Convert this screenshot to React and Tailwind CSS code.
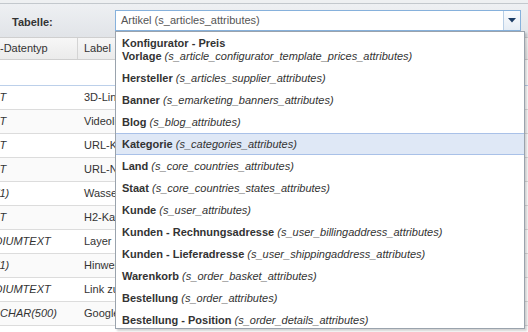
import React from 'react';

const rows = [
  ['TEXT', '3D-Link'],
  ['TEXT', 'Videolink'],
  ['TEXT', 'URL-Kategorie'],
  ['TEXT', 'URL-Name'],
  ['INT(1)', 'Wasserzeichen'],
  ['TEXT', 'H2-Kategorie'],
  ['MEDIUMTEXT', 'Layer'],
  ['INT(1)', 'Hinweis'],
  ['MEDIUMTEXT', 'Link zu'],
  ['VARCHAR(500)', 'Google'],
];

const options = [
  ['Hersteller', 's_articles_supplier_attributes'],
  ['Banner', 's_emarketing_banners_attributes'],
  ['Blog', 's_blog_attributes'],
  ['Kategorie', 's_categories_attributes'],
  ['Land', 's_core_countries_attributes'],
  ['Staat', 's_core_countries_states_attributes'],
  ['Kunde', 's_user_attributes'],
  ['Kunden - Rechnungsadresse', 's_user_billingaddress_attributes'],
  ['Kunden - Lieferadresse', 's_user_shippingaddress_attributes'],
  ['Warenkorb', 's_order_basket_attributes'],
  ['Bestellung', 's_order_attributes'],
  ['Bestellung - Position', 's_order_details_attributes'],
];

const App = () => {
  return (
    <div className="relative w-[528px] h-[332px] overflow-hidden bg-white text-[11px] text-[#333] font-['Liberation_Sans',Arial,sans-serif]">
      {/* toolbar */}
      <div className="h-[3px] bg-[#eef0f2]" />
      <div className="h-[34px] border-t border-[#c3c8cd] bg-gradient-to-b from-[#eef0f3] to-[#e1e4e8] flex items-start pt-[6px]">
        <div className="w-[115px] pl-[12px] pt-[6px] font-bold leading-[13px]">Tabelle:</div>
        <div className="w-[406px] h-[21px] flex border border-[#86b1dc] bg-white">
          <div className="flex-1 pl-[5px] leading-[19px] text-[#555]">Artikel (s_articles_attributes)</div>
          <div className="w-[17px] border-l border-[#b9cfe6] bg-gradient-to-b from-[#fbfcfe] to-[#e6edf5] flex items-center justify-center">
            <svg width="8" height="5" viewBox="0 0 8 5">
              <path d="M0 0 L8 0 L4 4.5 Z" fill="#1d3d66" />
            </svg>
          </div>
        </div>
      </div>

      {/* grid */}
      <div className="overflow-hidden">
        <div className="-ml-[26px]">
          <div className="h-[23px] flex border-t border-b border-[#cfcfcf] bg-gradient-to-b from-[#f7f7f7] to-[#ebebeb]">
            <div className="w-[104px] pl-[4px] leading-[21px] border-r border-[#d4d4d4] whitespace-nowrap">SQL-Datentyp</div>
            <div className="flex-1 pl-[6px] leading-[21px]">Label</div>
          </div>
          <div className="h-[26px] border-b border-[#bcd0ea]" />
          {rows.map(([type, label], i) => (
            <div
              key={i}
              className={`h-[24px] flex border-b border-[#dcdcdc] ${i % 2 === 1 ? 'bg-[#fafafa]' : 'bg-white'}`}
            >
              <div className="w-[104px] pl-[4px] leading-[23px] italic whitespace-nowrap">{type}</div>
              <div className="flex-1 pl-[6px] leading-[23px] whitespace-nowrap">{label}</div>
            </div>
          ))}
        </div>
      </div>

      {/* dropdown list */}
      <div className="absolute left-[115px] top-[31px] w-[410px] h-[298px] bg-white border border-[#9aa3ad] shadow-[2px_2px_2px_rgba(0,0,0,0.18)] overflow-hidden pt-[1px]">
        <div className="px-[6px] py-[3px] border-y border-transparent leading-[13px]">
          <b>Konfigurator - Preis</b>
          <br />
          <b>Vorlage</b> <i>(s_article_configurator_template_prices_attributes)</i>
        </div>
        {options.map(([name, table]) => (
          <div
            key={table}
            className={`px-[6px] py-[3px] leading-[14px] border-y whitespace-nowrap ${
              name === 'Kategorie' ? 'bg-[#dfe8f6] border-[#a9c1e8]' : 'border-transparent'
            }`}
          >
            <b>{name}</b> <i>({table})</i>
          </div>
        ))}
      </div>
    </div>
  );
};

export default App;
